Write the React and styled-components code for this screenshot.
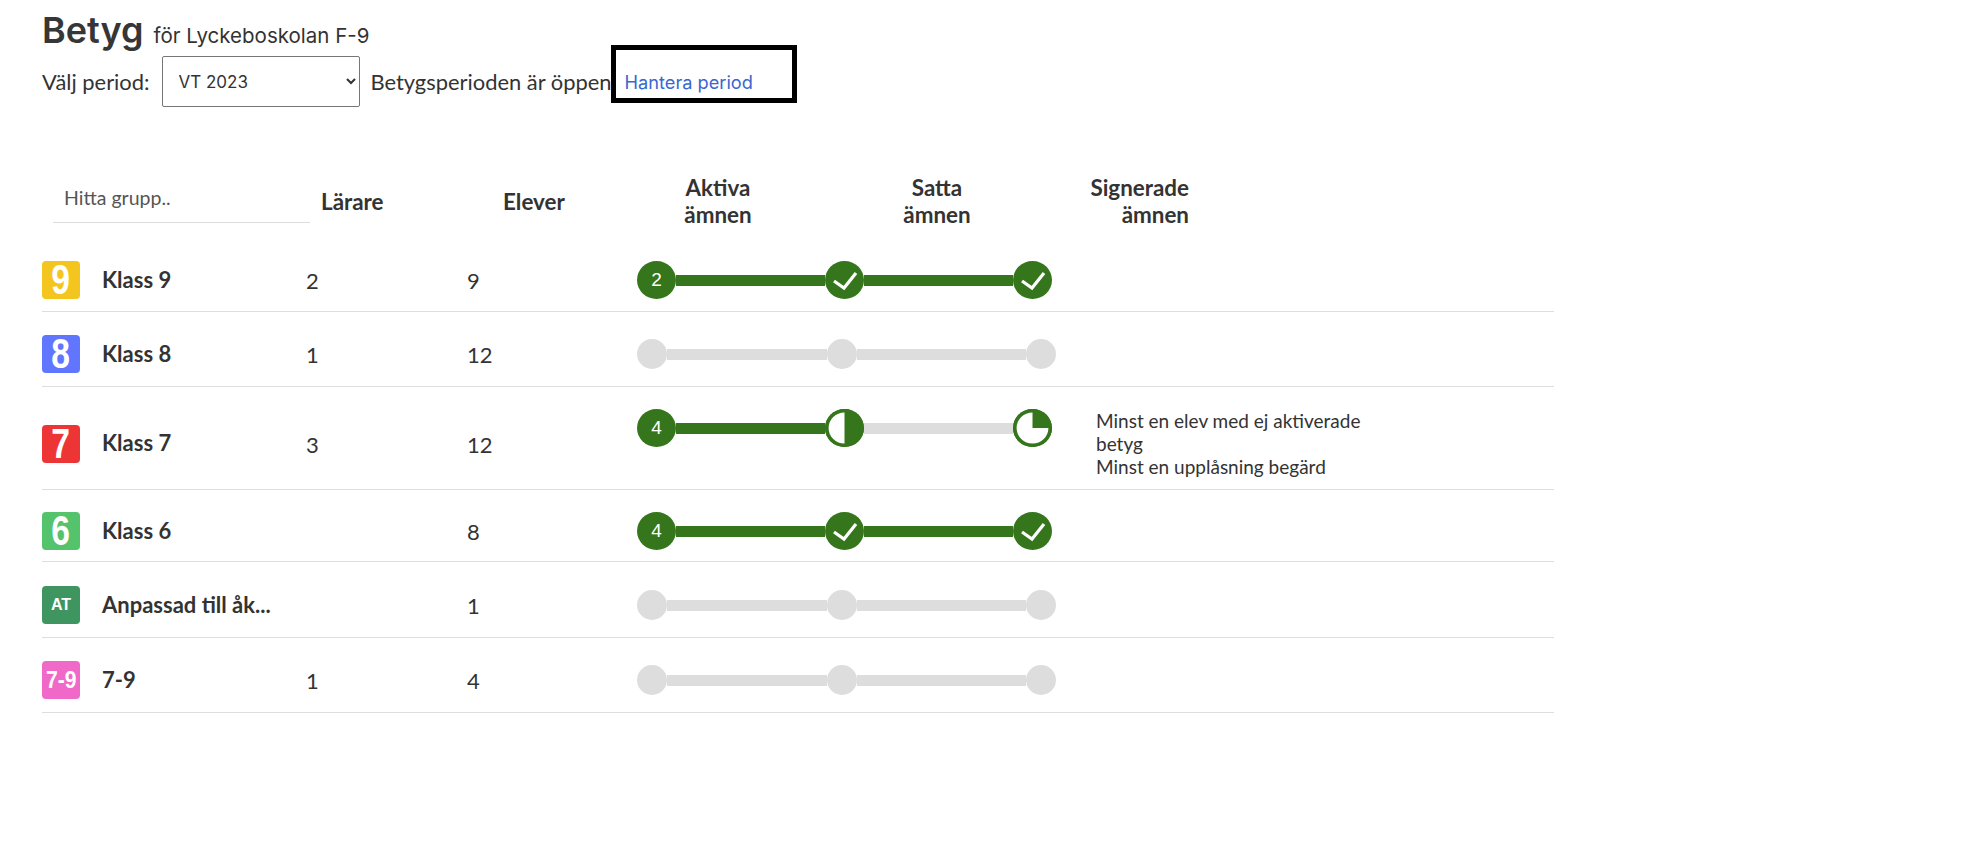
import React from "react";
import styled, { createGlobalStyle } from "styled-components";

const GREEN = "#35761c";
const GRAY = "#dddddd";

const GlobalStyle = createGlobalStyle`
  html, body {
    margin: 0;
    padding: 0;
    background: #fff;
    color: #333;
    font-family: "Lato", "Liberation Sans", sans-serif;
  }
`;

const Page = styled.div`
  width: 1512px;
  padding-left: 42px;
  min-height: 855px;
  box-sizing: content-box;
`;

const TitleRow = styled.div`
  display: flex;
  align-items: baseline;
  height: 56px;
  gap: 10px;
`;

const Title = styled.h1`
  margin: 0;
  font-family: "Inter", sans-serif;
  font-size: 36px;
  line-height: 61px;
  font-weight: 600;
  color: #363636;
`;

const Subtitle = styled.span`
  font-family: "Inter", sans-serif;
  font-size: 20.5px;
  color: #333;
`;

const PeriodRow = styled.div`
  display: flex;
  align-items: center;
  height: 51px;
  font-size: 21.9px;
`;

const PeriodSelect = styled.select`
  width: 198px;
  height: 51px;
  margin: 0 11px 0 12px;
  padding: 0 8px 0 12px;
  background: #fff;
  border: 1px solid #767676;
  border-radius: 2px;
  color: #333;
  font-family: "Inter", sans-serif;
  font-size: 17px;
`;

const PeriodLink = styled.a`
  box-sizing: border-box;
  display: flex;
  align-items: center;
  width: 186px;
  height: 58px;
  margin: 0 0 15px -1px;
  padding: 16px 0 0 9px;
  border: 5px solid #000;
  color: #3a66d0;
  font-family: "Inter", sans-serif;
  font-size: 18.2px;
  text-decoration: none;
`;

const HeaderRow = styled.div`
  display: grid;
  grid-template-columns: 268px 182px 155px 219px 192px 120px;
  margin: 66px 0 9px 11px;
  font-size: 22.4px;
  font-weight: 700;
  line-height: 27px;
  color: #333;
`;

const SearchInput = styled.input`
  box-sizing: border-box;
  width: 257px;
  height: 50px;
  padding: 0 11px;
  border: 0;
  border-bottom: 1px solid #ddd;
  outline: none;
  font-family: "Lato", sans-serif;
  font-size: 19.5px;
  &::placeholder {
    color: #555;
    opacity: 1;
  }
`;

const ColumnLabel = styled.div`
  padding-top: 15px;
`;

const ColumnTitle = styled.div`
  width: 120px;
  padding-top: 1px;
  text-align: ${(p) => p.$align || "center"};
`;

const Row = styled.div`
  display: grid;
  grid-template-columns: 60px 204px 161px 170px 459px 1fr;
  align-items: center;
  padding: ${(p) => p.$top}px 0 ${(p) => p.$bottom}px;
  border-bottom: 1px solid #dedede;
`;

const Badge = styled.div`
  display: flex;
  align-items: center;
  justify-content: center;
  width: 38px;
  height: 38px;
  border-radius: 4px;
  background: ${(p) => p.$color};
  color: #fff;
  font-family: "Liberation Sans", sans-serif;
  font-weight: 700;
  font-size: ${(p) => p.$size || 42}px;
  line-height: 1;
`;

// digits in the badges are drawn taller than wide
const BadgeDigit = styled.span`
  display: inline-block;
  transform: scaleX(${(p) => p.$squeeze || 0.8});
`;

const GroupName = styled.div`
  font-size: 22px;
  font-weight: 700;
  color: #333;
  margin-top: -2px;
`;

const Count = styled.div`
  font-size: 22px;
  color: #333;
  padding-top: 1px;
`;

const Steps = styled.div`
  display: flex;
  align-items: center;
  align-self: ${(p) => (p.$top ? "start" : "center")};
`;

const Connector = styled.div`
  width: ${(p) => p.$width}px;
  height: 11px;
  background: ${(p) => (p.$done ? GREEN : GRAY)};
`;

const Dot = styled.div`
  flex: none;
  width: 30px;
  height: 30px;
  border-radius: 50%;
  background: ${GRAY};
`;

const Stage = styled.div`
  flex: none;
  display: flex;
  align-items: center;
  justify-content: center;
  width: 39px;
  height: 38px;
  border-radius: 50%;
  background: ${GREEN};
  color: #fff;
  font-family: "Liberation Sans", sans-serif;
  font-size: 19px;
`;

const Notes = styled.div`
  align-self: end;
  width: 290px;
  font-size: 19px;
  line-height: 23px;
  color: #333;
`;

function Check() {
  return (
    <svg width="38" height="38" viewBox="0 0 38 38">
      <polyline points="8,20 18,27 30,12" fill="none" stroke="#fff" strokeWidth="3.2" />
    </svg>
  );
}

function HalfPie() {
  return (
    <svg width="39" height="38" viewBox="0 0 38 38" preserveAspectRatio="none">
      <circle cx="19" cy="19" r="19" fill={GREEN} />
      <path d="M19 3.5 A15.5 15.5 0 0 0 19 34.5 Z" fill="#fff" />
    </svg>
  );
}

function QuarterPie() {
  return (
    <svg width="39" height="38" viewBox="0 0 38 38" preserveAspectRatio="none">
      <circle cx="19" cy="19" r="19" fill={GREEN} />
      <path d="M19 3.5 A15.5 15.5 0 1 0 34.5 19 L19 19 Z" fill="#fff" />
    </svg>
  );
}

function DoneSteps({ count }) {
  return (
    <Steps>
      <Stage>{count}</Stage>
      <Connector $done $width={149} />
      <Stage><Check /></Stage>
      <Connector $done $width={149} />
      <Stage><Check /></Stage>
    </Steps>
  );
}

function EmptySteps() {
  return (
    <Steps>
      <Dot />
      <Connector $width={160} />
      <Dot />
      <Connector $width={169} />
      <Dot />
    </Steps>
  );
}

export default function App() {
  return (
    <Page>
      <GlobalStyle />
      <TitleRow>
        <Title>Betyg</Title>
        <Subtitle>för Lyckeboskolan F-9</Subtitle>
      </TitleRow>
      <PeriodRow>
        <span>Välj period:</span>
        <PeriodSelect defaultValue="VT 2023">
          <option>VT 2023</option>
          <option>HT 2022</option>
        </PeriodSelect>
        <span>Betygsperioden är öppen</span>
        <PeriodLink href="#">Hantera period</PeriodLink>
      </PeriodRow>

      <HeaderRow>
        <SearchInput placeholder="Hitta grupp.." />
        <ColumnLabel>Lärare</ColumnLabel>
        <ColumnLabel>Elever</ColumnLabel>
        <ColumnTitle>Aktiva<br />ämnen</ColumnTitle>
        <ColumnTitle>Satta<br />ämnen</ColumnTitle>
        <ColumnTitle $align="right">Signerade<br />ämnen</ColumnTitle>
      </HeaderRow>

      <Row $top={24} $bottom={12}>
        <Badge $color="#f5c51f"><BadgeDigit>9</BadgeDigit></Badge>
        <GroupName>Klass 9</GroupName>
        <Count>2</Count>
        <Count>9</Count>
        <DoneSteps count={2} />
      </Row>
      <Row $top={23} $bottom={13}>
        <Badge $color="#6176fe"><BadgeDigit>8</BadgeDigit></Badge>
        <GroupName>Klass 8</GroupName>
        <Count>1</Count>
        <Count>12</Count>
        <EmptySteps />
      </Row>
      <Row $top={22} $bottom={11}>
        <Badge $color="#ee3535"><BadgeDigit>7</BadgeDigit></Badge>
        <GroupName>Klass 7</GroupName>
        <Count>3</Count>
        <Count>12</Count>
        <Steps $top>
          <Stage>4</Stage>
          <Connector $done $width={149} />
          <Stage><HalfPie /></Stage>
          <Connector $width={149} />
          <Stage><QuarterPie /></Stage>
        </Steps>
        <Notes>
          Minst en elev med ej aktiverade betyg
          <br />
          Minst en upplåsning begärd
        </Notes>
      </Row>
      <Row $top={22} $bottom={11}>
        <Badge $color="#55c36b"><BadgeDigit>6</BadgeDigit></Badge>
        <GroupName>Klass 6</GroupName>
        <Count />
        <Count>8</Count>
        <DoneSteps count={4} />
      </Row>
      <Row $top={24} $bottom={13}>
        <Badge $color="#3e9560" $size={16}>AT</Badge>
        <GroupName>Anpassad till åk...</GroupName>
        <Count />
        <Count>1</Count>
        <EmptySteps />
      </Row>
      <Row $top={23} $bottom={13}>
        <Badge $color="#f069c8" $size={24}><BadgeDigit $squeeze={0.88}>7-9</BadgeDigit></Badge>
        <GroupName>7-9</GroupName>
        <Count>1</Count>
        <Count>4</Count>
        <EmptySteps />
      </Row>
    </Page>
  );
}
